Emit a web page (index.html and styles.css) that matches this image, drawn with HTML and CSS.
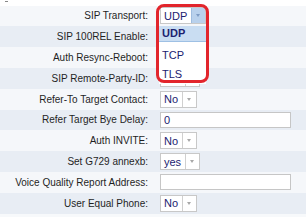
FILE: index.html
```html
<!DOCTYPE html>
<html lang="en">
<head>
    <meta charset="UTF-8">
    <meta name="viewport" content="width=device-width, initial-scale=1.0">
    <title>SIP Settings</title>
    <link rel="stylesheet" href="styles.css">
</head>
<body>
    <div class="top-strip"><span class="mark"></span></div>

    <div class="form">
        <div class="row light">
            <label>SIP Transport:</label>
            <div class="control">
                <span class="select focused"><span class="val">UDP</span><span class="arrow"></span></span>
                <!-- lista abierta -->
                <ul class="menu">
                    <li class="active">UDP</li>
                    <li>TCP</li>
                    <li>TLS</li>
                </ul>
                <div class="ring"></div>
            </div>
        </div>
        <!-- estos tres quedan tapados por la lista -->
        <div class="row dark">
            <label>SIP 100REL Enable:</label>
            <div class="control"><span class="select"><span class="val blank"></span><span class="arrow"></span></span></div>
        </div>
        <div class="row light">
            <label>Auth Resync-Reboot:</label>
            <div class="control"><span class="select"><span class="val blank"></span><span class="arrow"></span></span></div>
        </div>
        <div class="row dark">
            <label>SIP Remote-Party-ID:</label>
            <div class="control"><span class="select"><span class="val blank"></span><span class="arrow"></span></span></div>
        </div>
        <div class="row light">
            <label>Refer-To Target Contact:</label>
            <div class="control"><span class="select"><span class="val">No</span><span class="arrow"></span></span></div>
        </div>
        <div class="row dark">
            <label>Refer Target Bye Delay:</label>
            <div class="control"><input class="text" type="text" value="0"></div>
        </div>
        <div class="row light">
            <label>Auth INVITE:</label>
            <div class="control"><span class="select"><span class="val">No</span><span class="arrow"></span></span></div>
        </div>
        <div class="row dark">
            <label>Set G729 annexb:</label>
            <div class="control"><span class="select"><span class="val">yes</span><span class="arrow"></span></span></div>
        </div>
        <div class="row light">
            <label>Voice Quality Report Address:</label>
            <div class="control"><input class="text" type="text" value=""></div>
        </div>
        <div class="row dark">
            <label>User Equal Phone:</label>
            <div class="control"><span class="select"><span class="val">No</span><span class="arrow"></span></span></div>
        </div>
    </div>
</body>
</html>
```

FILE: styles.css
```css
body {
    margin: 0;
    background: #f7f9fb;
    font-family: "Liberation Sans", Arial, sans-serif;
    font-size: 10px;
    color: #1f1f1f;
    overflow: hidden;
}
.top-strip {
    height: 5.6px;
    background: #fff;
    position: relative;
}
.top-strip .mark {
    position: absolute;
    left: 5px;
    top: 1px;
    width: 3px;
    height: 1px;
    background: #888;
}
.form {
    display: grid;
    grid-auto-rows: 20.8px;
}
.row {
    display: grid;
    grid-template-columns: 148px 1fr;
    column-gap: 12px;
    align-items: center;
}
.row.light { background: #f5f7fa; }
.row.dark { background: #e8edf4; }
.row label {
    text-align: right;
    white-space: nowrap;
}
.control {
    position: relative;
    height: 100%;
    display: flex;
    align-items: center;
}

/* selects */
.select {
    display: inline-flex;
    height: 17px;
    box-sizing: border-box;
    border: 1px solid #c8c8c8;
    background: #fff;
    font-size: 11px;
    color: #1b2270;
}
.select .val {
    display: flex;
    align-items: center;
    padding: 0 4px 0 3px;
}
.select .val.blank {
    width: 17px;
}
.select .arrow {
    width: 13px;
    border-left: 1px solid #d0d0d0;
    position: relative;
}
.select .arrow::after {
    content: "";
    position: absolute;
    left: 4px;
    top: 6px;
    border-left: 2.5px solid transparent;
    border-right: 2.5px solid transparent;
    border-top: 3px solid #a8a8a8;
}
.select.focused .arrow {
    background: #b9d1ec;
    border-left-color: #9fbde0;
}
.select.focused .arrow::after {
    border-top-color: #7f9cc4;
}

.text {
    width: 131px;
    height: 16px;
    box-sizing: border-box;
    border: 1px solid #c6c6c6;
    background: #fff;
    padding: 0 3px;
    margin: 0;
    font-family: "Liberation Sans", Arial, sans-serif;
    font-size: 11px;
    color: #1b2270;
    outline: none;
}

/* lista desplegada */
.menu {
    position: absolute;
    left: -1px;
    top: 20.4px;
    width: 47px;
    margin: 0;
    padding: 0;
    list-style: none;
    background: #fff;
    font-size: 11px;
    color: #1b2270;
    z-index: 2;
}
.menu li {
    height: 19px;
    line-height: 19px;
    padding-left: 3px;
}
.menu li.active {
    font-weight: bold;
    background: #c9ddf2;
    border-bottom: 1px solid #9ec0e4;
    height: 15px;
    line-height: 15px;
    margin-bottom: 4px;
}
.ring {
    position: absolute;
    left: -4px;
    top: -1.6px;
    width: 53px;
    height: 79px;
    box-sizing: border-box;
    border: 3px solid #e2252c;
    border-radius: 8px;
    z-index: 3;
}
```
